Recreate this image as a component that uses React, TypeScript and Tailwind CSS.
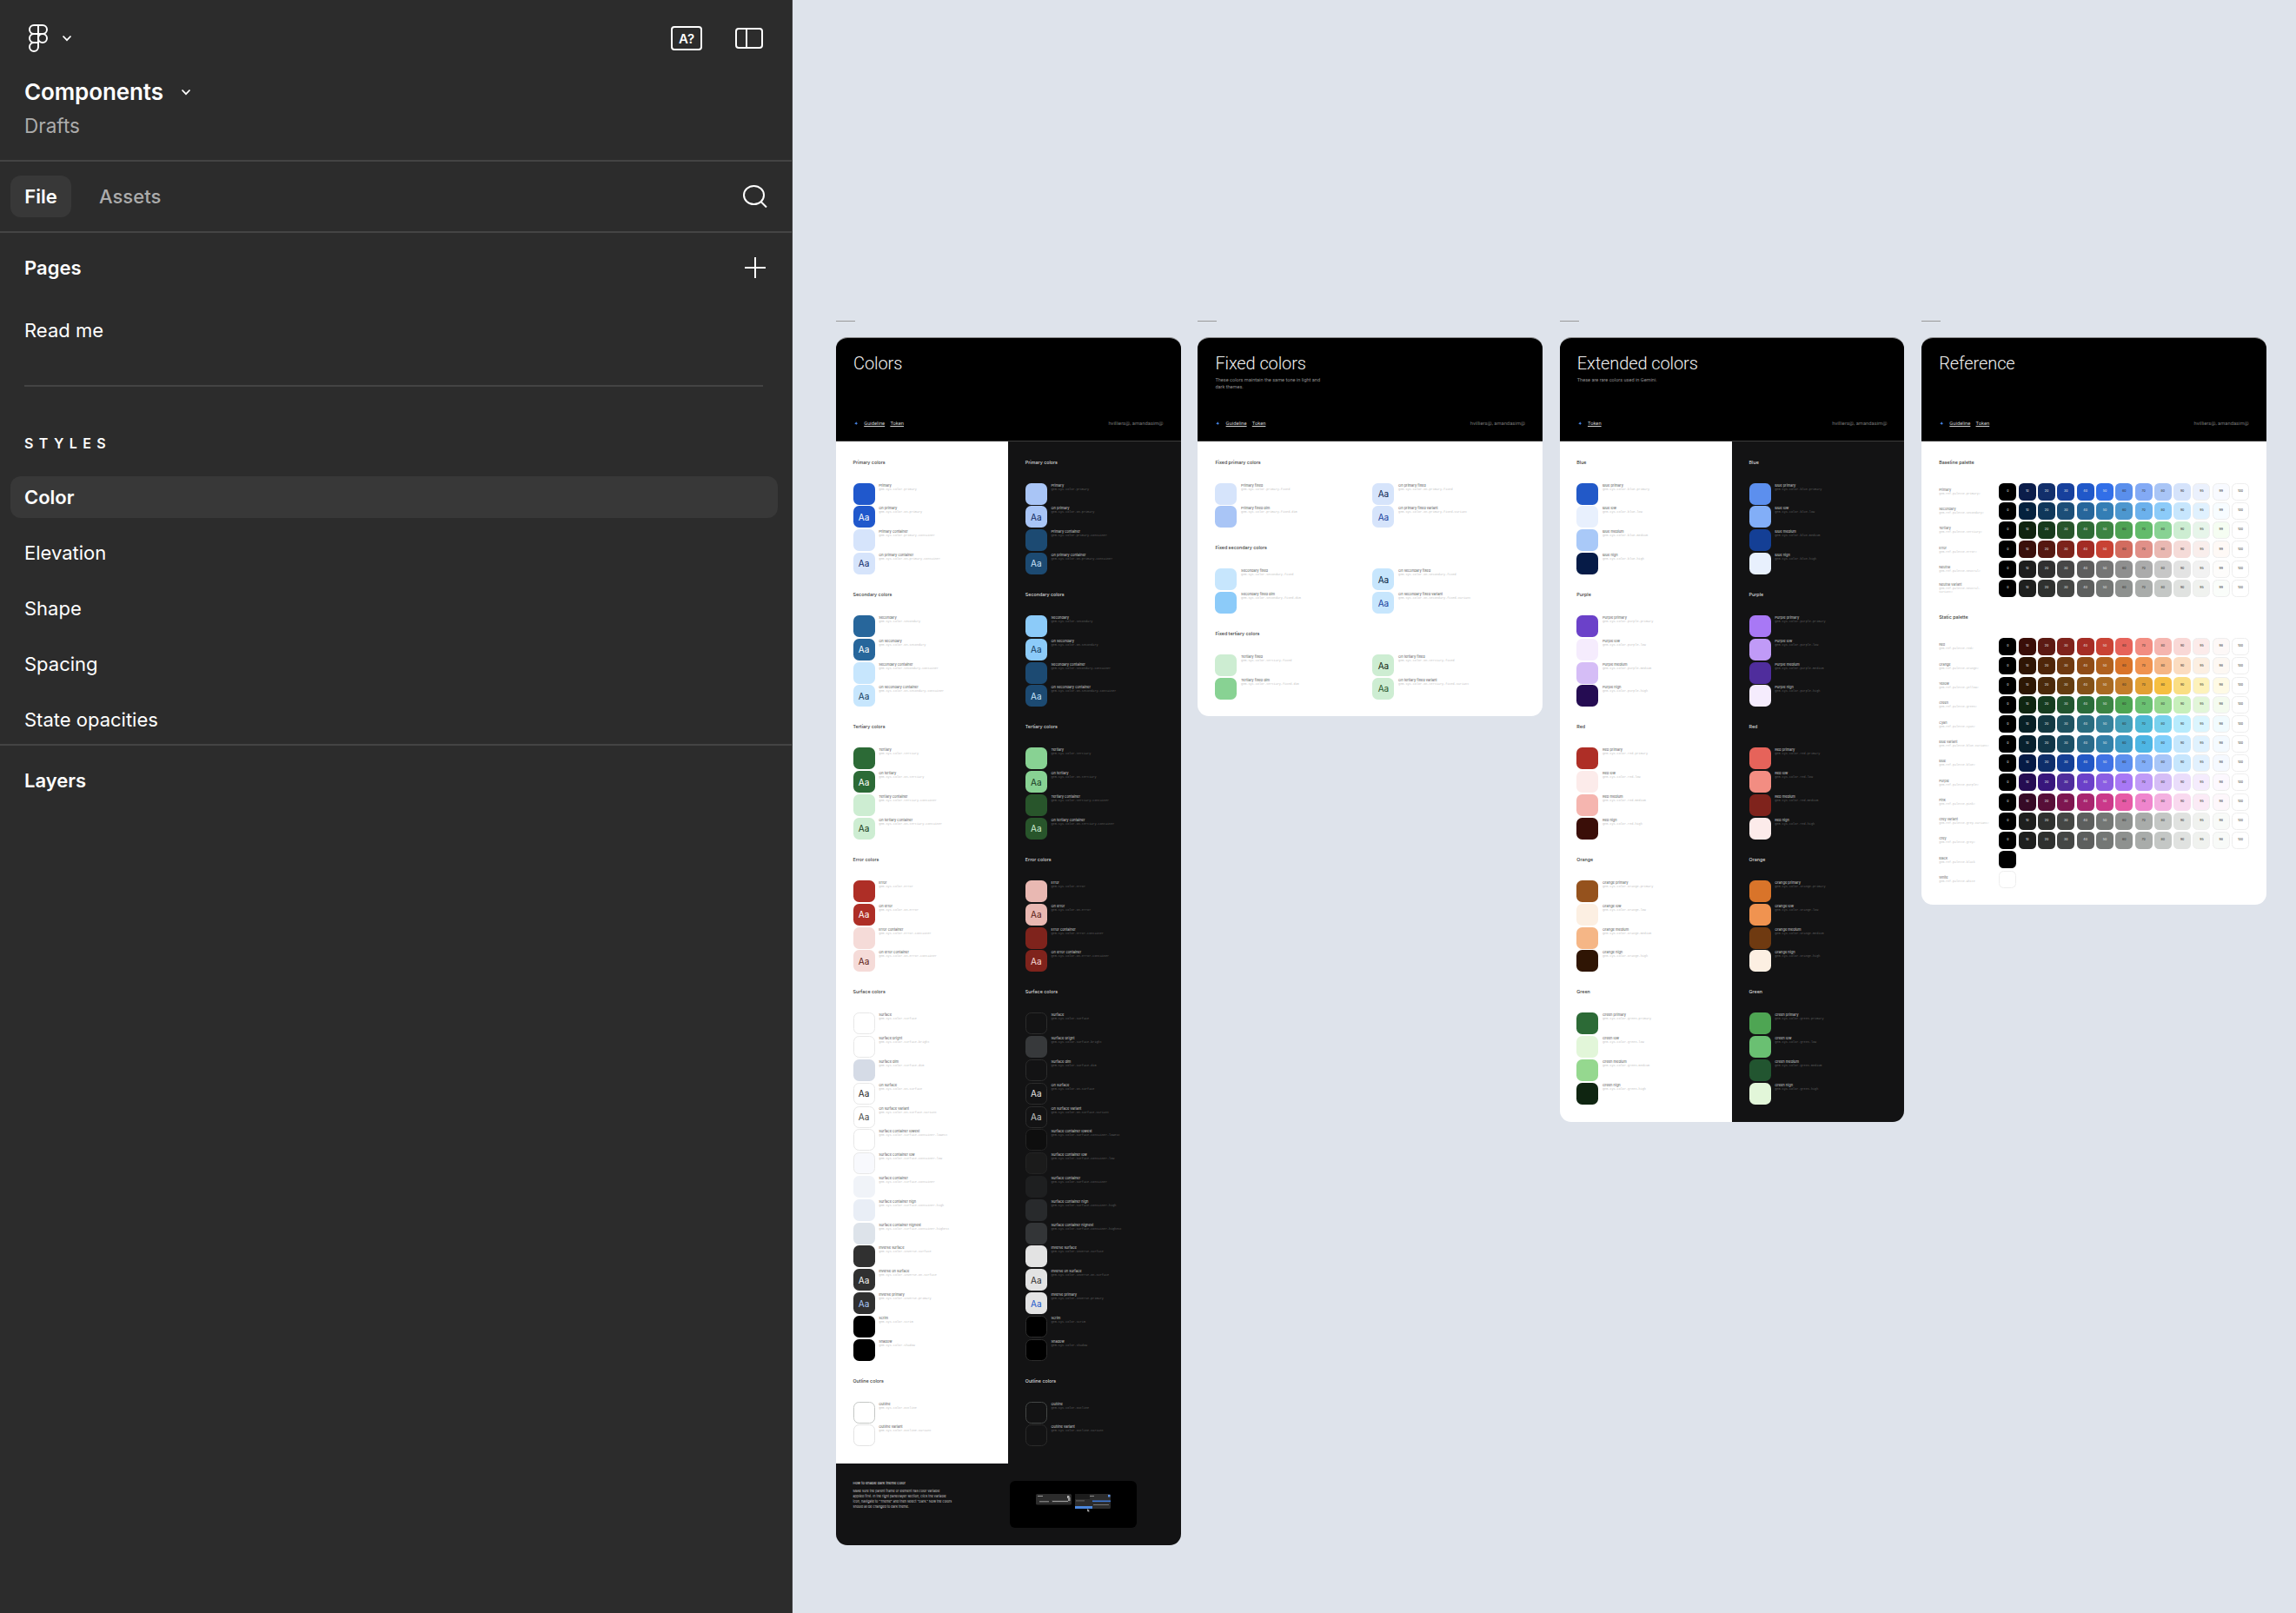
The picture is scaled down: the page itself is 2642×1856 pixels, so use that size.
import React from "react";

type Sw = { n: string; bg: string; aa?: string; bd?: string };

const token = (prefix: string, n: string) => prefix + n.toLowerCase().replace(/ /g, "-");

function Swatch({ bg, aa, bd }: { bg: string; aa?: string; bd?: string }) {
  return (
    <div
      className="w-[25px] h-[25px] shrink-0 rounded-[6.5px] flex items-center justify-center text-[10px] leading-none font-['Inter',sans-serif]"
      style={{ backgroundColor: bg, color: aa, border: bd ? `0.6px solid ${bd}` : undefined }}
    >
      {aa ? "Aa" : ""}
    </div>
  );
}

function Row({ s, dark, prefix = "gem.sys.color." }: { s: Sw; dark: boolean; prefix?: string }) {
  return (
    <div className="flex gap-[4.7px] h-[25px]">
      <Swatch bg={s.bg} aa={s.aa} bd={s.bd} />
      <div className="whitespace-nowrap">
        <div className={`text-[4px] leading-[5px] font-['Inter',sans-serif] ${dark ? "text-[#d0d0d0]" : "text-[#555555]"}`}>{s.n}</div>
        <div className={`text-[3.48px] leading-[4.7px] font-['Liberation_Mono',monospace] ${dark ? "text-[#5c5c5c]" : "text-[#c4c4c4]"}`}>{token(prefix, s.n)}</div>
      </div>
    </div>
  );
}

function SectionTitle({ t, dark }: { t: string; dark: boolean }) {
  return (
    <div className={`h-[8px] mb-[20px] text-[5.35px] leading-[8px] font-medium font-['Inter',sans-serif] whitespace-nowrap ${dark ? "text-[#d8d8d8]" : "text-[#3c3c3c]"}`}>{t}</div>
  );
}

function Section({ t, rows, dark }: { t: string; rows: Sw[]; dark: boolean }) {
  return (
    <div>
      <SectionTitle t={t} dark={dark} />
      <div className="flex flex-col gap-[1.8px]">
        {rows.map((r) => (
          <Row key={r.n} s={r} dark={dark} />
        ))}
      </div>
    </div>
  );
}

function Column({ sections, dark }: { sections: { t: string; rows: Sw[] }[]; dark: boolean }) {
  return (
    <div className={`flex-1 flex flex-col gap-[19.1px] pt-[20px] pb-[20px] pl-[19.5px] ${dark ? "bg-[#131314]" : "bg-white"}`}>
      {sections.map((s) => (
        <Section key={s.t} t={s.t} rows={s.rows} dark={dark} />
      ))}
    </div>
  );
}

function Header({ title, desc, links }: { title: string; desc?: React.ReactNode; links: string[] }) {
  return (
    <div className="h-[119px] bg-black border-b border-[#3c3c3c] flex flex-col justify-between px-[20px] pt-[17px] pb-[15.5px]">
      <div>
        <div className="text-[20px] leading-[24px] font-light tracking-[-0.1px] text-[#f2f2f2] font-['Roboto',sans-serif] whitespace-nowrap">{title}</div>
        {desc && <div className="mt-[3px] w-[130px] text-[5.6px] leading-[8.3px] text-[#8f8f8f] font-['Roboto',sans-serif]">{desc}</div>}
      </div>
      <div className="flex items-center justify-between text-[5.8px] leading-[8px] font-['Roboto',sans-serif]">
        <div className="flex items-center">
          <svg width="4.4" height="4.4" viewBox="0 0 10 10" className="ml-[1px] mr-[6.8px]">
            <path d="M5 0C5.4 3 7 4.6 10 5 7 5.4 5.4 7 5 10 4.6 7 3 5.4 0 5 3 4.6 4.6 3 5 0Z" fill="#4a8df5" />
          </svg>
          {links.map((l) => (
            <span key={l} className="text-[#cfcfcf] underline underline-offset-[1px] decoration-[0.4px] mr-[6.2px]">{l}</span>
          ))}
        </div>
        <span className="text-[#777777]">hvilliers@, amandasim@</span>
      </div>
    </div>
  );
}

const colorLight = [
  { t: "Primary colors", rows: [
    { n: "Primary", bg: "#2058cc" }, { n: "On primary", bg: "#2058cc", aa: "#ffffff" },
    { n: "Primary container", bg: "#d6e4fb" }, { n: "On primary container", bg: "#d6e4fb", aa: "#0e2a6a" } ] },
  { t: "Secondary colors", rows: [
    { n: "Secondary", bg: "#27669b" }, { n: "On secondary", bg: "#27669b", aa: "#ffffff" },
    { n: "Secondary container", bg: "#c7e6fd" }, { n: "On secondary container", bg: "#c7e6fd", aa: "#123a5c" } ] },
  { t: "Tertiary colors", rows: [
    { n: "Tertiary", bg: "#2c6a36" }, { n: "On tertiary", bg: "#2c6a36", aa: "#ffffff" },
    { n: "Tertiary container", bg: "#cdedd2" }, { n: "On tertiary container", bg: "#cdedd2", aa: "#163c20" } ] },
  { t: "Error colors", rows: [
    { n: "Error", bg: "#ae2e26" }, { n: "On error", bg: "#ae2e26", aa: "#ffffff" },
    { n: "Error container", bg: "#f5dbd8" }, { n: "On error container", bg: "#f5dbd8", aa: "#5c1a13" } ] },
  { t: "Surface colors", rows: [
    { n: "Surface", bg: "#ffffff", bd: "#e8e8e8" }, { n: "Surface bright", bg: "#ffffff", bd: "#e8e8e8" }, { n: "Surface dim", bg: "#d5dbe6" },
    { n: "On surface", bg: "#ffffff", aa: "#1f1f1f", bd: "#e8e8e8" }, { n: "On surface variant", bg: "#ffffff", aa: "#444746", bd: "#e8e8e8" },
    { n: "Surface container lowest", bg: "#ffffff", bd: "#e8e8e8" }, { n: "Surface container low", bg: "#f8f9fd", bd: "#e8e8e8" },
    { n: "Surface container", bg: "#f0f3f8" }, { n: "Surface container high", bg: "#e9eef6" }, { n: "Surface container highest", bg: "#dde3ea" },
    { n: "Inverse surface", bg: "#303030" }, { n: "Inverse on surface", bg: "#303030", aa: "#f2f2f2" }, { n: "Inverse primary", bg: "#303030", aa: "#a8c7fa" },
    { n: "Scrim", bg: "#000000" }, { n: "Shadow", bg: "#000000" } ] },
  { t: "Outline colors", rows: [ { n: "Outline", bg: "#ffffff", bd: "#c4c7c5" }, { n: "Outline variant", bg: "#ffffff", bd: "#e3e3e3" } ] },
];

const colorDark = [
  { t: "Primary colors", rows: [
    { n: "Primary", bg: "#a9c5f6" }, { n: "On primary", bg: "#a9c5f6", aa: "#102a60" },
    { n: "Primary container", bg: "#1c4a72" }, { n: "On primary container", bg: "#1c4a72", aa: "#c7e0f8" } ] },
  { t: "Secondary colors", rows: [
    { n: "Secondary", bg: "#8ccbf9" }, { n: "On secondary", bg: "#8ccbf9", aa: "#123a5c" },
    { n: "Secondary container", bg: "#1c4a72" }, { n: "On secondary container", bg: "#1c4a72", aa: "#c7e6fd" } ] },
  { t: "Tertiary colors", rows: [
    { n: "Tertiary", bg: "#88d293" }, { n: "On tertiary", bg: "#88d293", aa: "#16391f" },
    { n: "Tertiary container", bg: "#28552b" }, { n: "On tertiary container", bg: "#28552b", aa: "#cdedd2" } ] },
  { t: "Error colors", rows: [
    { n: "Error", bg: "#e9b8b2" }, { n: "On error", bg: "#e9b8b2", aa: "#5a1a14" },
    { n: "Error container", bg: "#7f231c" }, { n: "On error container", bg: "#7f231c", aa: "#f5dbd8" } ] },
  { t: "Surface colors", rows: [
    { n: "Surface", bg: "#131314", bd: "#2c2c2c" }, { n: "Surface bright", bg: "#37393b" }, { n: "Surface dim", bg: "#131314", bd: "#2c2c2c" },
    { n: "On surface", bg: "#131314", aa: "#e3e3e3", bd: "#2c2c2c" }, { n: "On surface variant", bg: "#131314", aa: "#c4c7c5", bd: "#2c2c2c" },
    { n: "Surface container lowest", bg: "#0e0e0e", bd: "#242424" }, { n: "Surface container low", bg: "#1b1b1b", bd: "#242424" },
    { n: "Surface container", bg: "#1e1f20" }, { n: "Surface container high", bg: "#282a2c" }, { n: "Surface container highest", bg: "#333537" },
    { n: "Inverse surface", bg: "#e3e3e3" }, { n: "Inverse on surface", bg: "#e3e3e3", aa: "#303030" }, { n: "Inverse primary", bg: "#e3e3e3", aa: "#2058cc" },
    { n: "Scrim", bg: "#000000", bd: "#2c2c2c" }, { n: "Shadow", bg: "#000000", bd: "#2c2c2c" } ] },
  { t: "Outline colors", rows: [ { n: "Outline", bg: "#131314", bd: "#444746" }, { n: "Outline variant", bg: "#131314", bd: "#2b2b2b" } ] },
];

const ext = (t: string, a: string, b: string, c: string, d: string) => ({
  t,
  rows: [
    { n: `${t} primary`, bg: a },
    { n: `${t} low`, bg: b },
    { n: `${t} medium`, bg: c },
    { n: `${t} high`, bg: d },
  ],
});

const extLight = [
  ext("Blue", "#2259c8", "#e8f0fd", "#a9c9f8", "#061b47"),
  ext("Purple", "#6b41c9", "#f5ecfd", "#d5bdf6", "#250c52"),
  ext("Red", "#ae2e26", "#fcebea", "#f5b5af", "#3a0e08"),
  ext("Orange", "#95521d", "#fcefe2", "#f5b686", "#2f1504"),
  ext("Green", "#2c6a36", "#e2f6d9", "#95d88f", "#0f2511"),
];
const extDark = [
  ext("Blue", "#5c8fee", "#82aef7", "#143f95", "#e8f0fd"),
  ext("Purple", "#a878f5", "#c09af7", "#4f2d9c", "#f5ecfd"),
  ext("Red", "#e6635a", "#f28d82", "#7f231c", "#fcebea"),
  ext("Orange", "#d9742a", "#f09350", "#6f3a11", "#fcefe2"),
  ext("Green", "#4ea553", "#6ac072", "#225530", "#e2f6d9"),
];

const fixedSections: { t: string; left: Sw[]; right: Sw[] }[] = [
  { t: "Fixed primary colors",
    left: [{ n: "Primary fixed", bg: "#d6e4fb" }, { n: "Primary fixed dim", bg: "#a9c5f6" }],
    right: [{ n: "On primary fixed", bg: "#d6e4fb", aa: "#0a1f50" }, { n: "On primary fixed variant", bg: "#d6e4fb", aa: "#17409c" }] },
  { t: "Fixed secondary colors",
    left: [{ n: "Secondary fixed", bg: "#c7e6fd" }, { n: "Secondary fixed dim", bg: "#8ccbf9" }],
    right: [{ n: "On secondary fixed", bg: "#c7e6fd", aa: "#04213e" }, { n: "On secondary fixed variant", bg: "#c7e6fd", aa: "#17409c" }] },
  { t: "Fixed tertiary colors",
    left: [{ n: "Tertiary fixed", bg: "#cdedd2" }, { n: "Tertiary fixed dim", bg: "#88d293" }],
    right: [{ n: "On tertiary fixed", bg: "#cdedd2", aa: "#10230f" }, { n: "On tertiary fixed variant", bg: "#cdedd2", aa: "#28552b" }] },
];

const W = "#ffffff";
const baseline: { n: string; t: string; c: string[] }[] = [
  { n: "Primary", t: "gem.ref.palette.primary#", c: ["#000000","#0b1d4a","#122f6b","#17409c","#2058c9","#326fe8","#5a8fec","#83aaf5","#a9c5f6","#d5e3fb","#ebf1fd","#f8faff",W] },
  { n: "Secondary", t: "gem.ref.palette.secondary#", c: ["#000000","#04213e","#10375a","#1c4e78","#27669b","#347eb5","#4d97cf","#6cb1ec","#8ccbf9","#c7e6fd","#e0f1fe","#f7fcff",W] },
  { n: "Tertiary", t: "gem.ref.palette.tertiary#", c: ["#000000","#10230f","#173a1c","#28552b","#2f6b36","#3d8443","#4ea253","#63bb6b","#88d293","#cdedd2","#e7f5ea","#f5fdf2",W] },
  { n: "Error", t: "gem.ref.palette.error#", c: ["#000000","#3a100b","#551811","#7c231b","#a32c25","#c84234","#d26c5f","#e09088","#e9b8b2","#f5dbd8","#f9eeec","#fef9f6",W] },
  { n: "Neutral", t: "gem.ref.palette.neutral#", c: ["#000000","#1e1e1e","#303030","#474747","#5e5e5e","#757575","#8f8f8f","#ababab","#c7c7c7","#e3e3e3","#f2f2f2","#fdfcfb",W] },
  { n: "Neutral variant", t: "gem.ref.palette.neutral-variant#", c: ["#000000","#1e1f1e","#2f312f","#454745","#5d5f5e","#747775","#8e918f","#a9acaa","#c4c7c5","#e0e2e0","#f0f2ef","#fafdfa",W] },
];
const greyVar = ["#000000","#1e1f1e","#2f312f","#454745","#5d5f5e","#747775","#8e918f","#a9acaa","#c4c7c5","#e0e2e0","#f0f2ef","#f8faf8",W];
const staticPal: { n: string; t: string; c: string[] }[] = [
  { n: "Red", t: "gem.ref.palette.red#", c: ["#000000","#3a0e08","#5c1a13","#7f231c","#a52d25","#c94335","#e6635a","#f28d82","#f5b5af","#f9d8d6","#fcebea","#fdf8f7",W] },
  { n: "Orange", t: "gem.ref.palette.orange#", c: ["#000000","#2f1504","#4f2609","#6f3a11","#8f4c17","#b0611f","#d9742a","#f09350","#f5b686","#fbdcc0","#fcefe2","#fdf8f3",W] },
  { n: "Yellow", t: "gem.ref.palette.yellow#", c: ["#000000","#2d1704","#4b2a0b","#643d11","#845219","#a86a22","#c47e2b","#e2a034","#f6bf41","#fade83","#fdf2bb","#fefae5",W] },
  { n: "Green", t: "gem.ref.palette.green#", c: ["#000000","#0f2511","#163c20","#225530","#2b6c3b","#3c8444","#4ea553","#6ac072","#95d88f","#c7efbb","#e2f6d9","#f4fbef",W] },
  { n: "Cyan", t: "gem.ref.palette.cyan#", c: ["#000000","#081f25","#133842","#1f5261","#2a6c80","#36819b","#449fb9","#4fb8d7","#78d1ee","#b7ebfd","#dbf5fe","#f1fbfe",W] },
  { n: "Blue variant", t: "gem.ref.palette.blue-variant#", c: ["#000000","#08202d","#113547","#1c4f66","#2a6a8a","#3380a8","#3f9bc6","#4eb6e4","#80cffa","#c5e7fd","#e0f2fe","#f4faff",W] },
  { n: "Blue", t: "gem.ref.palette.blue#", c: ["#000000","#051a45","#0e2e6a","#143f95","#2257c5","#4072e4","#5c8fee","#82aef7","#a8c6f8","#c6e6fd","#e2f1fe","#f5f9ff",W] },
  { n: "Purple", t: "gem.ref.palette.purple#", c: ["#000000","#250c52","#38167c","#4f2d9c","#6b41c9","#8b5ee3","#a878f5","#c09af7","#d5bdf6","#eaddfb","#f5ecfd","#fcf8fe",W] },
  { n: "Pink", t: "gem.ref.palette.pink#", c: ["#000000","#360a26","#570f38","#7d1650","#a8256f","#cb398a","#e65aa6","#ef85cd","#f4b0e0","#f9d9ef","#fbebf6","#fdf7fb",W] },
  { n: "Grey variant", t: "gem.ref.palette.grey-variant#", c: greyVar },
  { n: "Grey", t: "gem.ref.palette.grey#", c: greyVar },
  { n: "Black", t: "gem.ref.palette.black", c: ["#000000"] },
  { n: "White", t: "gem.ref.palette.white", c: [W] },
];
const tones = (last: string) => ["0", "10", "20", "30", "40", "50", "60", "70", "80", "90", "95", last, "100"];

function Palette({ title, rows, last }: { title: string; rows: { n: string; t: string; c: string[] }[]; last: string }) {
  const t = tones(last);
  return (
    <div>
      <SectionTitle t={title} dark={false} />
      <div className="flex flex-col gap-[2.3px]">
        {rows.map((r) => (
          <div key={r.n} className="flex items-center h-[20px]">
            <div className="w-[69.3px] shrink-0 pr-[8px]">
              <div className="text-[3.8px] leading-[5px] text-[#666666] font-['Inter',sans-serif]">{r.n}</div>
              <div className="text-[3.3px] leading-[4.4px] text-[#c4c4c4] font-['Liberation_Mono',monospace] [overflow-wrap:anywhere]">{r.t}</div>
            </div>
            <div className="flex gap-[2.3px]">
              {r.c.map((c, i) => {
                const single = r.c.length === 1;
                return (
                  <div
                    key={i}
                    className="w-[20px] h-[20px] rounded-[5.5px] flex items-center justify-center text-[3.6px] font-['Inter',sans-serif]"
                    style={{
                      backgroundColor: c,
                      color: i <= 5 ? "#e8e8e8" : "#2a2a2a",
                      border: i >= 10 || (single && c === W) ? "0.5px solid #eeeeee" : undefined,
                    }}
                  >
                    {single ? "" : t[i]}
                  </div>
                );
              })}
            </div>
          </div>
        ))}
      </div>
    </div>
  );
}

function Frame({ children }: { children: React.ReactNode }) {
  return (
    <div className="w-[396.6px] shrink-0">
      <div className="h-[1px] w-[22px] bg-[#9a9a9a] mb-[17.5px]" />
      <div className="rounded-[13px] overflow-hidden border-t-[0.5px] border-[#8a8a8a]">{children}</div>
    </div>
  );
}

function MiniShot() {
  return (
    <svg width="146" height="54" viewBox="0 0 146 54" className="block">
      <rect x="30" y="15" width="41" height="12.5" rx="1.5" fill="#2c2c2c" />
      <rect x="32" y="17" width="6" height="1" fill="#9a9a9a" />
      <rect x="66" y="17" width="2.5" height="3" fill="#b5b5b5" />
      <rect x="34" y="23" width="11" height="1.4" fill="#7a7a7a" />
      <rect x="48" y="22" width="21" height="3" fill="#3b3b3b" />
      <rect x="49" y="23" width="18" height="1" fill="#9a9a9a" />
      <rect x="67" y="19" width="2.5" height="4" fill="#999999" />
      <rect x="75" y="15" width="41" height="17" rx="1.5" fill="#2c2c2c" />
      <rect x="75" y="15" width="17" height="6" fill="#1c1c1c" />
      <rect x="92" y="17" width="5" height="1" fill="#8a8a8a" />
      <rect x="113" y="16" width="2.5" height="2.5" fill="#5c92e8" />
      <rect x="95" y="22.5" width="21" height="1.6" fill="#3f79d6" />
      <rect x="76" y="22.5" width="10" height="0.8" fill="#777777" />
      <rect x="96" y="27" width="18" height="0.8" fill="#8a8a8a" />
      <rect x="75" y="29" width="20" height="3" fill="#4a86dc" />
      <path d="M89 32v3.5l1 -.8 .8 1.3 .8 -.4 -.7 -1.3 1.1 -.2z" fill="#9a9a9a" />
    </svg>
  );
}

function Figma() {
  return (
    <svg width="24" height="32" viewBox="0 0 24 32" fill="none" stroke="#ffffff" strokeWidth="2">
      <path d="M12 1H7a5 5 0 0 0 0 10h5z" />
      <path d="M12 1h5a5 5 0 0 1 0 10h-5z" />
      <path d="M12 11H7a5 5 0 0 0 0 10h5z" />
      <circle cx="17" cy="16" r="5" />
      <path d="M7 21h5v5a5 5 0 1 1-5-5z" />
    </svg>
  );
}

function Chevron() {
  return (
    <svg width="12" height="8" viewBox="0 0 12 8" fill="none" stroke="#ffffff" strokeWidth="1.7">
      <path d="M1.5 1.5 6 6.2 10.5 1.5" />
    </svg>
  );
}

function Sidebar() {
  const hr = "h-[2px] bg-[#444444] shrink-0";
  return (
    <aside className="w-[912px] h-[1856px] shrink-0 bg-[#2c2c2c] border-r border-[#3c3c3c] flex flex-col font-['Inter',sans-serif] text-white">
      <div className="h-[184px] pl-[28px] pr-[33px] pt-[28px] shrink-0">
        <div className="flex items-center h-[32px] justify-between">
          <div className="flex items-center gap-[15px] pl-[4px]">
            <Figma />
            <Chevron />
          </div>
          <div className="flex items-center gap-[38px]">
            <div className="w-[36px] h-[28px] rounded-[4px] border-2 border-white flex items-center justify-center text-[15px] font-semibold leading-none">A?</div>
            <div className="w-[32px] h-[24px] rounded-[4px] border-2 border-white flex">
              <div className="w-[12px] border-r-2 border-white" />
            </div>
          </div>
        </div>
        <div className="flex items-center gap-[20px] mt-[28px] h-[36px]">
          <span className="text-[26px] leading-[36px] font-semibold tracking-[-0.1px]">Components</span>
          <Chevron />
        </div>
        <div className="mt-[5px] h-[32px] text-[22.5px] leading-[32px] text-[#ababab]">Drafts</div>
      </div>
      <div className={hr} />
      <div className="h-[80px] shrink-0 flex items-center justify-between pl-[12px] pr-[28px]">
        <div className="flex items-center gap-[32px]">
          <div className="h-[48px] w-[70px] rounded-[12px] bg-[#383838] flex items-center justify-center text-[22px] font-semibold">File</div>
          <div className="text-[22px] font-medium text-[#ababab]">Assets</div>
        </div>
        <svg width="28" height="26" viewBox="0 0 28 26" fill="none" stroke="#ffffff" strokeWidth="2">
          <ellipse cx="12.5" cy="11.5" rx="11.5" ry="10.5" />
          <path d="M20.5 19 27 25.5" />
        </svg>
      </div>
      <div className={hr} />
      <div className="flex items-center justify-between h-[80px] pl-[28px] pr-[30px] shrink-0">
        <span className="text-[22px] font-semibold">Pages</span>
        <svg width="24" height="24" viewBox="0 0 24 24" stroke="#ffffff" strokeWidth="2">
          <path d="M12 0v24M0 12h24" />
        </svg>
      </div>
      <div className="h-[64px] flex items-center pl-[28px] text-[22px] shrink-0">Read me</div>
      <div className="h-[2px] bg-[#444444] ml-[28px] mr-[33px] mt-[31px] shrink-0" />
      <div className="pl-[28px] mt-[55px] h-[20px] text-[16px] leading-[20px] font-semibold tracking-[6.4px] shrink-0">STYLES</div>
      <div className="mt-[28px] pl-[12px] pr-[16px] text-[22px] flex flex-col gap-[16px] shrink-0">
        <div className="h-[48px] rounded-[12px] bg-[#383838] pl-[16px] flex items-center font-semibold">Color</div>
        {["Elevation", "Shape", "Spacing", "State opacities"].map((s) => (
          <div key={s} className="h-[48px] pl-[16px] flex items-center">{s}</div>
        ))}
      </div>
      <div className="h-[2px] bg-[#444444] mt-[4px] shrink-0" />
      <div className="h-[80px] flex items-center pl-[28px] text-[22px] font-semibold shrink-0">Layers</div>
    </aside>
  );
}

export default function App() {
  return (
    <div className="flex w-[2642px] h-[1856px] overflow-hidden">
      <Sidebar />
      <main className="flex-1 bg-[#dee3eb] pl-[50px] pt-[369px] flex items-start gap-[19.8px]">
        <Frame>
          <Header title="Colors" links={["Guideline", "Token"]} />
          <div className="flex">
            <Column sections={colorLight} dark={false} />
            <Column sections={colorDark} dark={true} />
          </div>
          <div className="bg-[#131314] flex pt-[20px] pb-[20px] pl-[19.5px]">
            <div className="w-[180.5px] shrink-0">
              <div className="text-[4px] leading-[5px] text-[#e0e0e0] font-['Inter',sans-serif]">How to enable dark theme color</div>
              <div className="mt-[3.6px] text-[3.7px] leading-[5.9px] text-[#c4c4c4] font-['Inter',sans-serif] whitespace-nowrap">
                Make sure the parent frame or element has color variable<br />
                applied first. In the right panel/layer section, click the variable<br />
                icon, navigate to "Theme" and then select "Dark." Now the colors<br />
                should all be changed to dark theme.
              </div>
            </div>
            <div className="w-[146px] h-[54px] rounded-[6px] bg-black overflow-hidden">
              <MiniShot />
            </div>
          </div>
        </Frame>

        <Frame>
          <Header
            title="Fixed colors"
            desc="These colors maintain the same tone in light and dark themes."
            links={["Guideline", "Token"]}
          />
          <div className="bg-white px-[20px] pt-[20px] pb-[19.5px] flex flex-col gap-[19px]">
            {fixedSections.map((s) => (
              <div key={s.t}>
                <SectionTitle t={s.t} dark={false} />
                <div className="flex">
                  <div className="w-[181px] shrink-0 flex flex-col gap-[1.8px]">
                    {s.left.map((r) => <Row key={r.n} s={r} dark={false} />)}
                  </div>
                  <div className="flex flex-col gap-[1.8px]">
                    {s.right.map((r) => <Row key={r.n} s={r} dark={false} />)}
                  </div>
                </div>
              </div>
            ))}
          </div>
        </Frame>

        <Frame>
          <Header title="Extended colors" desc="These are rare colors used in Gemini." links={["Token"]} />
          <div className="flex">
            <Column sections={extLight} dark={false} />
            <Column sections={extDark} dark={true} />
          </div>
        </Frame>

        <Frame>
          <Header title="Reference" links={["Guideline", "Token"]} />
          <div className="bg-white pl-[20px] pt-[20px] pb-[19.5px] flex flex-col gap-[19.2px]">
            <Palette title="Baseline palette" rows={baseline} last="99" />
            <Palette title="Static palette" rows={staticPal} last="98" />
          </div>
        </Frame>
      </main>
    </div>
  );
}
